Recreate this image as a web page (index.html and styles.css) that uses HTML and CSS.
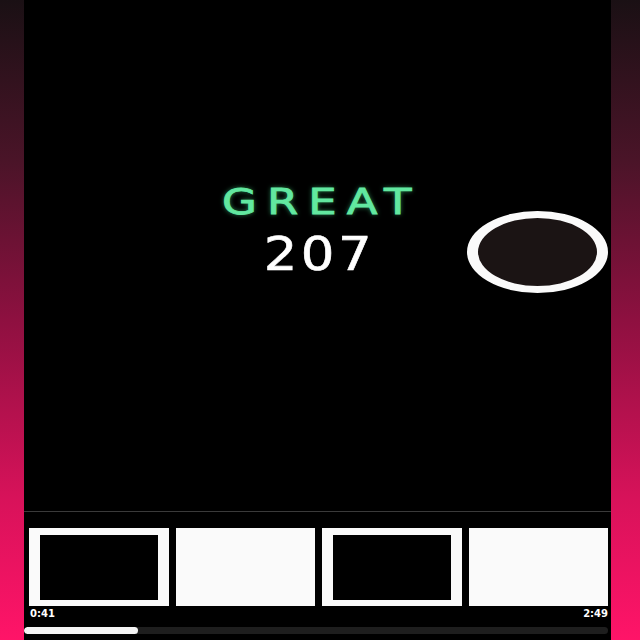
FILE: index.html
```html
<!DOCTYPE html>
<html>
<head>
<meta charset="utf-8">
<link rel="stylesheet" href="styles.css">
</head>
<body>
<div class="frame">
  <div class="side side-left"></div>
  <main class="stage">
    <section class="play">
      <div class="judge">GREAT</div>
      <div class="combo">207</div>
      <div class="note"></div>
    </section>
    <section class="lanes">
      <div class="tile tile-hollow"></div>
      <div class="tile tile-solid"></div>
      <div class="tile tile-hollow"></div>
      <div class="tile tile-solid"></div>
    </section>
    <div class="times">
      <span class="time">0:41</span>
      <span class="time">2:49</span>
    </div>
    <div class="progress"><div class="progress-fill" style="width:19.5%"></div></div>
  </main>
  <div class="side side-right"></div>
</div>
</body>
</html>
```
FILE: styles.css
```css
* { box-sizing: border-box; }
html, body { margin: 0; padding: 0; background: #000; }
.frame {
  display: flex;
  width: 640px;
  height: 640px;
  overflow: hidden;
}
.side {
  background: linear-gradient(180deg, #1a1014 0%, #4a1428 25%, #8e1040 50%, #d8125a 78%, #ff1468 100%);
}
.side-left { width: 24px; }
.side-right { width: 29px; }
.stage {
  width: 587px;
  display: flex;
  flex-direction: column;
  background: #000;
}
.play {
  position: relative;
  height: 512px;
  border-bottom: 1px solid #3a3a3a;
  display: flex;
  flex-direction: column;
  align-items: center;
  padding-top: 182px;
}
.judge {
  font-family: "DejaVu Sans", sans-serif;
  font-weight: 400;
  font-size: 36px;
  line-height: 40px;
  letter-spacing: 8px;
  margin-right: -8px;
  color: #62e8a0;
  -webkit-text-stroke: 0.8px #62e8a0;
  text-shadow: 0 0 5px rgba(70, 220, 140, 0.7);
  transform: scaleX(1.25);
}
.combo {
  font-family: "DejaVu Sans", sans-serif;
  font-weight: 400;
  font-size: 46px;
  line-height: 50px;
  letter-spacing: 3px;
  margin-right: -3px;
  color: #fff;
  -webkit-text-stroke: 0.6px #fff;
  margin-top: 7px;
  transform: scaleX(1.15);
}
.note {
  position: absolute;
  left: 443px;
  top: 211px;
  width: 141px;
  height: 82px;
  border-radius: 50%;
  border-style: solid;
  border-color: #fafafa;
  border-width: 7px 11px;
  background: #1b1414;
}
.lanes {
  display: grid;
  grid-template-columns: repeat(4, 1fr);
  gap: 7px;
  margin: 16px 3px 0 5px;
  height: 78px;
}
.tile { background: #fafafa; }
.tile-hollow {
  border-style: solid;
  border-color: #fafafa;
  border-width: 7px 11px 6px 11px;
  background: #000;
}
.times {
  display: flex;
  justify-content: space-between;
  margin: 1px 3px 0 6px;
  height: 14px;
}
.time {
  font-family: "DejaVu Sans", sans-serif;
  font-weight: 700;
  font-size: 10px;
  line-height: 14px;
  color: #fff;
}
.progress {
  margin: 6px 3px 0 0;
  height: 7px;
  border-radius: 4px;
  background: #1e1e1e;
  overflow: hidden;
}
.progress-fill {
  height: 100%;
  border-radius: 4px;
  background: #f4f4f4;
}
```
